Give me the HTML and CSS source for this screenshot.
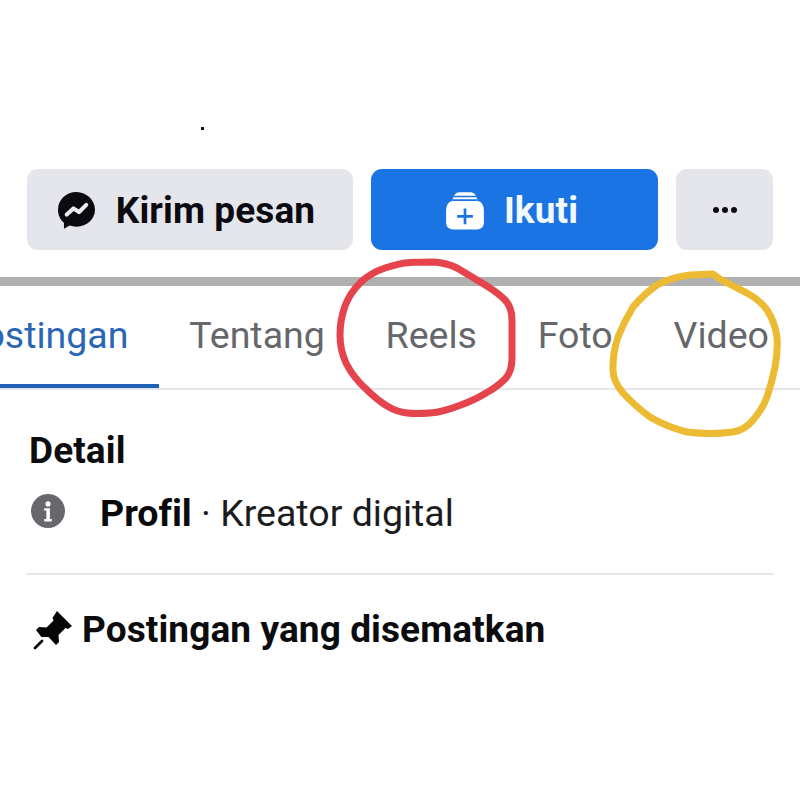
FILE: index.html
```html
<!DOCTYPE html>
<html lang="id">
<head>
<meta charset="utf-8">
<title>Profil</title>
<link rel="stylesheet" href="styles.css">
</head>
<body>
<main class="page">
  <div class="top"><span class="speck"></span></div>
  <div class="actions">
    <button class="btn btn-grey btn-send">
      <svg class="ic-msg" viewBox="0 0 36 36"><path fill="#0a0a10" d="M18 0C8 0 0 7.400 0 17.200c0 5.200 2.200 9.600 5.800 12.600v6l5.600-3.100c2 .6 4.300 1 6.600 1 10 0 18-7.400 18-16.500S28 0 18 0z"/><path fill="none" stroke="#eceded" stroke-width="4" stroke-linecap="round" stroke-linejoin="round" d="M8.500 22l6.500-6 5.500 3.500L27.500 12.500"/></svg>
      <span>Kirim pesan</span>
    </button>
    <button class="btn btn-blue">
      <svg class="ic-add" viewBox="0 0 40 40"><path fill="#fff" d="M9 8C10 4.500 12 3 15 3h10c3 0 5 1.500 6 5l1.500 4H34c2.500 1.500 4 4.500 4 8.500V32c0 4-2.500 6.500-6.500 6.500h-23C4.500 38.500 2 36 2 32V20.500c0-4 1.500-7 4-8.500h1.500z"/><path stroke="#1b74e4" stroke-width="1.500" d="M9.500 7.200h21M8 10.600h24"/><path stroke="#1b74e4" stroke-width="2.600" d="M20 18.500v15M12.500 26h15"/></svg>
      <span>Ikuti</span>
    </button>
    <button class="btn btn-grey btn-more"><i></i><i></i><i></i></button>
  </div>
  <div class="bar"></div>
  <nav class="tabs">
    <a class="tab active">Postingan</a>
    <a class="tab">Tentang</a>
    <a class="tab">Reels</a>
    <a class="tab">Foto</a>
    <a class="tab">Video</a>
  </nav>
  <section class="detail">
    <h2 class="title">Detail</h2>
    <div class="info">
      <svg class="ic-info" viewBox="0 0 36 36"><circle cx="18" cy="18" r="18" fill="#68686c"/><circle cx="18" cy="10.500" r="2.700" fill="#fff"/><path fill="#fff" d="M14 15h6v11.500h2V29h-8v-2.500h2.300V17.500H14z"/></svg>
      <p class="info-text"><b>Profil</b> · Kreator digital</p>
    </div>
    <hr class="rule">
    <div class="pinned">
      <svg class="ic-pin" viewBox="0 0 40 40"><path fill="#050505" d="M24 1l15 15-4 3-2.500-1-7 7 .5 7-3 3-7.500-8-7 0-.5-.5 0 0L3 20l3-3 7.500.5 7-7L19.500 8z"/><path stroke="#050505" stroke-width="2.800" stroke-linecap="round" d="M2 38l7-7"/></svg>
      <h2 class="title">Postingan yang disematkan</h2>
    </div>
  </section>
</main>
<svg class="scribbles" viewBox="0 0 800 800">
  <path class="red" d="M434 262Q447 263 457 268Q467 274 482 283Q497 292 504 299Q512 306 512 320L512 358Q512 372 505 379Q497 387 486 393Q473 401 458 406Q443 412 430 413Q417 414 407 413Q397 412 387 406Q377 400 365 388Q353 377 346 363Q340 350 340 335Q340 320 345 306Q350 293 360 283Q370 273 385 268Q400 263 410 262.500Q420 262 434 262Z"/>
  <path class="yellow" d="M690 275L713 274L720 279Q733 286 747 293Q760 300 767 310Q775 322 777 337Q778 352 775 367Q772 382 767 397Q762 410 753 420Q745 430 733 432Q710 435 687 432Q667 427 650 417Q635 406 623 393Q612 380 613 367Q613 352 618 337Q624 322 633 307Q644 294 657 285Q672 277 690 275Z"/>
</svg>
</body>
</html>
```
FILE: styles.css
```css
* { box-sizing: border-box; }
html, body { margin: 0; padding: 0; background: #fff; }
body { width: 800px; height: 800px; overflow: hidden; position: relative; font-family: Roboto, "Liberation Sans", sans-serif; font-variant-ligatures: none; color: #0a0a0f; }
.page { display: flex; flex-direction: column; }
.top { height: 169px; padding: 127px 0 0 201px; }
.speck { display: block; width: 3px; height: 3px; background: #111; }
.actions { display: grid; grid-template-columns: 326px 287px 97px; gap: 18px; padding: 0 27px; height: 81px; }
.btn { display: flex; align-items: center; justify-content: center; border: 0; border-radius: 11px; font-family: inherit; font-size: 37px; font-weight: 700; font-variant-ligatures: none; letter-spacing: 0.1px; padding: 2px 0 0; }
.btn-grey { background: #e4e6eb; color: #0a0a10; gap: 21px; }
.btn-send { padding-right: 7px; }
.btn-blue { background: #1b74e4; color: #f4f9ff; gap: 18px; padding-right: 7px; }
.ic-msg { width: 37px; height: 37px; margin-bottom: 1px; }
.ic-add { width: 42px; height: 42px; margin-bottom: 2px; }
.btn-more { gap: 3px; padding: 0; }
.btn-more i { width: 6px; height: 6px; border-radius: 50%; background: #0a0a10; }
.bar { height: 9px; margin-top: 27px; background: #b0b0b0; }
.tabs { display: flex; height: 104px; margin-left: -31px; border-bottom: 2px solid #e4e6eb; width: 831px; overflow: hidden; }
.tab { display: block; padding: 27px 30.400px 0; height: 102px; font-size: 37.500px; line-height: 44px; color: #65676b; white-space: nowrap; flex: none; }
.tab.active { color: #2a66b5; border-bottom: 4px solid #1f62b5; margin-left: -39.400px; }
.detail { display: flex; flex-direction: column; padding: 0 26px; }
.title { margin: 0; font-size: 37px; line-height: 44px; font-weight: 700; letter-spacing: 0.1px; color: #0c0c0e; }
.detail > .title { margin: 39px 0 0 3px; }
.info { display: flex; align-items: center; gap: 35px; padding-left: 5px; margin-top: 18px; height: 44px; }
.ic-info { width: 34px; height: 34px; flex: none; margin-bottom: 5px; }
.info-text { margin: 0; font-size: 37.500px; line-height: 44px; color: #1c1c1e; white-space: nowrap; }
.info-text b { color: #0a0a0c; }
.rule { border: 0; height: 2px; background: #e6e6e8; margin: 38px 0 0; }
.pinned { display: flex; align-items: center; gap: 9px; margin-top: 33px; padding-left: 7px; }
.ic-pin { width: 40px; height: 40px; flex: none; }
.scribbles { position: absolute; left: 0; top: 0; width: 800px; height: 800px; pointer-events: none; }
.scribbles path { fill: none; stroke-width: 7; stroke-linejoin: round; stroke-linecap: round; }
.red { stroke: #e5444c; }
.yellow { stroke: #ecbb33; }
```
